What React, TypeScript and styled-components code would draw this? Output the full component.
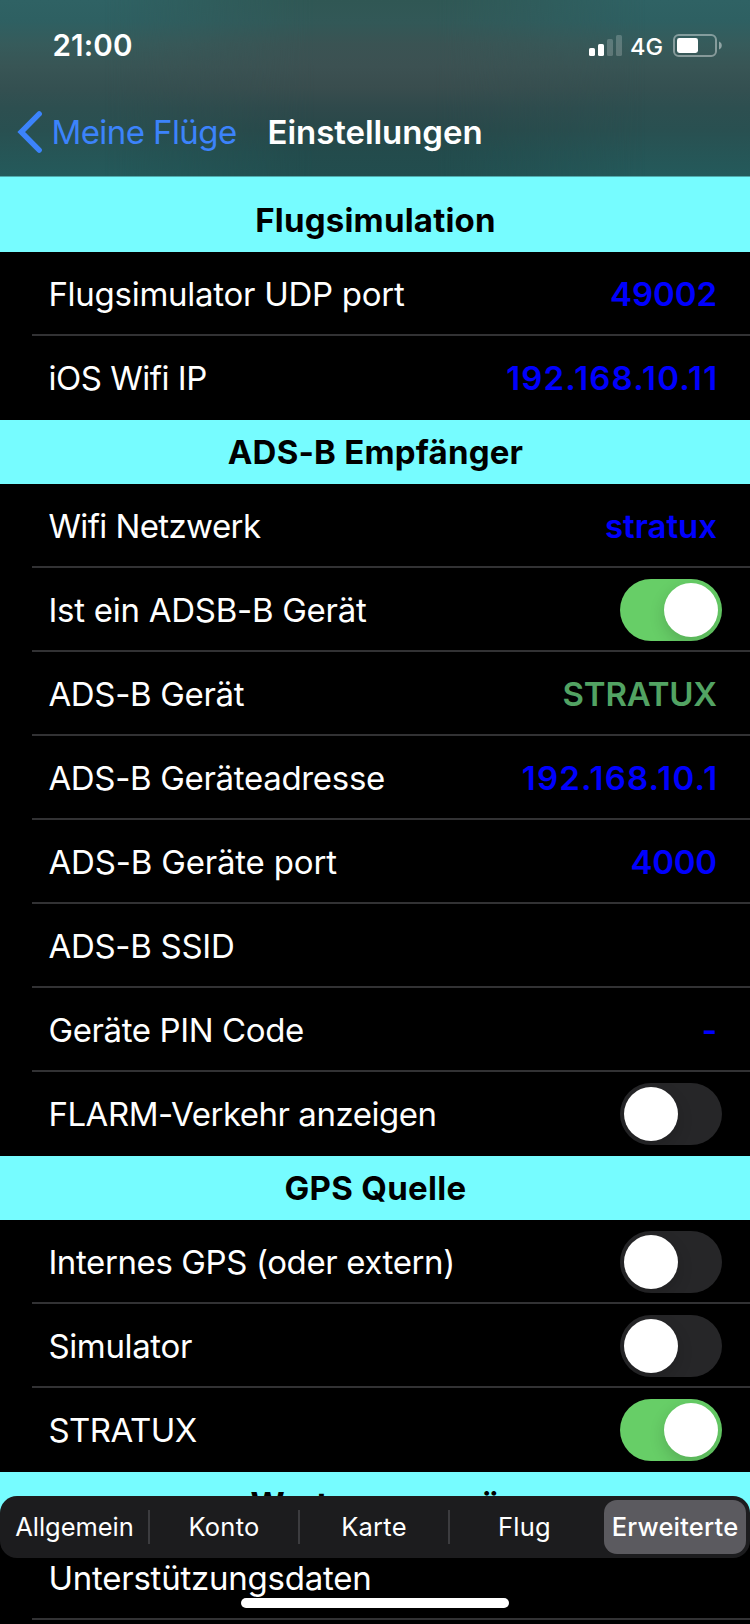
import React from 'react';
import styled, { createGlobalStyle } from 'styled-components';

const GlobalStyle = createGlobalStyle`
  * { box-sizing: border-box; }
  html, body { margin: 0; padding: 0; background: #000; }
  body { font-family: Inter, "Liberation Sans", sans-serif; overflow: hidden; }
`;

const Screen = styled.div`
  position: relative;
  width: 750px;
  height: 1624px;
  overflow: hidden;
  background: #000;
  color: #fff;
`;

const TopBar = styled.header`
  position: relative;
  height: 176px;
  background: linear-gradient(
    180deg,
    #2f6264 0px, #2e6062 20px, #365b5b 44px, #385555 66px, #345051 88px,
    #2d4f50 108px, #295051 130px, #265556 152px, #245a5b 176px
  );
  &::before {
    content: '';
    position: absolute;
    inset: 0;
    background: linear-gradient(
      180deg,
      #305754 0px, #325857 22px, #3a5353 44px, #3c5152 66px, #394d4e 88px,
      #2f494b 108px, #284849 130px, #234b4c 152px, #224d4e 176px
    );
    mask-image: linear-gradient(90deg, transparent 14%, #000 42%, #000 58%, transparent 86%);
  }
`;

const StatusBar = styled.div`
  position: relative;
  height: 88px;
  padding: 0 28px 0 52.5px;
  display: flex;
  justify-content: space-between;
`;

const Clock = styled.span`
  font-size: 29.6px;
  font-weight: 600;
  line-height: 90px;
  letter-spacing: 0.15px;
`;

const StatusIcons = styled.div`
  display: flex;
  align-items: flex-start;
`;

const Network = styled.span`
  width: 51px;
  padding-left: 8px;
  font-size: 23.5px;
  font-weight: 500;
  line-height: 93px;
`;

const SignalIcon = styled.svg`
  display: block;
  margin-top: 35px;
`;

const BatteryIcon = styled.svg`
  display: block;
  margin-top: 34px;
`;

const NavBar = styled.nav`
  position: relative;
  height: 88px;
  padding-left: 17px;
  display: flex;
  align-items: center;
  font-size: 33px;
  line-height: 88px;
  white-space: nowrap;
`;

const BackButton = styled.a`
  display: flex;
  align-items: center;
  gap: 8.4px;
  width: 250.5px;
  color: #3c83fb;
  letter-spacing: -0.57px;
`;

const NavTitle = styled.h1`
  margin: 0;
  font: inherit;
  font-weight: 600;
  letter-spacing: -0.06px;
`;

const SectionHeader = styled.h2<{ $first?: boolean; $spacing: number }>`
  margin: 0;
  height: ${p => (p.$first ? 76 : 64)}px;
  padding-top: ${p => (p.$first ? 12 : 0)}px;
  padding-left: 1px;
  background: #76fcff;
  box-shadow: ${p => (p.$first ? 'inset 0 1px 0 #4fabad' : 'none')};
  color: #000;
  font-size: 33px;
  font-weight: 700;
  line-height: 64px;
  letter-spacing: ${p => p.$spacing}px;
  text-align: center;
`;

const Row = styled.div<{ $last: boolean }>`
  height: 84px;
  margin-left: 32px;
  padding: 0 28px 0 16.4px;
  display: flex;
  align-items: center;
  justify-content: space-between;
  box-shadow: ${p => (p.$last ? 'none' : 'inset 0 -2px 0 #323234')};
  font-size: 33px;
  line-height: 84px;
  white-space: nowrap;
`;

const Label = styled.span<{ $spacing: number }>`
  letter-spacing: ${p => p.$spacing}px;
`;

const Value = styled.span<{ $color?: string; $spacing?: number }>`
  color: ${p => p.$color ?? '#0000fe'};
  font-weight: 600;
  letter-spacing: ${p => p.$spacing ?? 0}px;
  margin-right: ${p => 4.9 - (p.$spacing ?? 0)}px;
`;

const Switch = styled.span<{ $on: boolean }>`
  width: 102px;
  height: 62px;
  padding: 4px;
  border-radius: 31px;
  display: flex;
  justify-content: ${p => (p.$on ? 'flex-end' : 'flex-start')};
  background: ${p => (p.$on ? '#67ce67' : '#262628')};
  overflow: hidden;
`;

const Knob = styled.span`
  width: 54px;
  height: 54px;
  border-radius: 50%;
  background: #fff;
  box-shadow: 0 6px 16px rgba(0, 0, 0, 0.16);
`;

const SegmentedControl = styled.div`
  position: absolute;
  left: 0;
  top: 1496px;
  width: 750px;
  height: 62px;
  padding: 4px 4px 4px 0;
  border-radius: 17px;
  display: grid;
  grid-template-columns: 149px 150px 150px 151px 1fr;
  background: #1c1c1e;
`;

const Segment = styled.button<{ $selected: boolean; $divider: boolean; $spacing: number }>`
  position: relative;
  margin-left: ${p => (p.$selected ? 4 : 0)}px;
  padding: 0;
  border: 0;
  border-radius: 13px;
  background: ${p => (p.$selected ? '#5b5a5f' : 'transparent')};
  color: #fff;
  font: ${p => (p.$selected ? 500 : 400)} 25.5px Inter, sans-serif;
  line-height: 54px;
  letter-spacing: ${p => p.$spacing}px;
  &::after {
    content: '';
    display: ${p => (p.$divider ? 'block' : 'none')};
    position: absolute;
    right: -1px;
    top: 10px;
    width: 2px;
    height: 34px;
    background: #3c3c3f;
  }
`;

const HomeIndicator = styled.div`
  position: absolute;
  left: 241px;
  top: 1598px;
  width: 268px;
  height: 10px;
  border-radius: 5px;
  background: #fff;
`;

type Item = {
  label: string;
  spacing: number;
  value?: string;
  valueSpacing?: number;
  color?: string;
  on?: boolean;
};

type Section = { title: string; spacing: number; items: Item[]; open?: boolean };

const sections: Section[] = [
  {
    title: 'Flugsimulation',
    spacing: 0.2,
    items: [
      { label: 'Flugsimulator UDP port', spacing: -0.27, value: '49002' },
      { label: 'iOS Wifi IP', spacing: -0.48, value: '192.168.10.11', valueSpacing: 1.2 },
    ],
  },
  {
    title: 'ADS-B Empfänger',
    spacing: 0.22,
    items: [
      { label: 'Wifi Netzwerk', spacing: -0.6, value: 'stratux' },
      { label: 'Ist ein ADSB-B Gerät', spacing: -0.26, on: true },
      { label: 'ADS-B Gerät', spacing: -0.32, value: 'STRATUX', valueSpacing: -0.2, color: '#52a363' },
      { label: 'ADS-B Geräteadresse', spacing: -0.32, value: '192.168.10.1', valueSpacing: 1.15 },
      { label: 'ADS-B Geräte port', spacing: -0.17, value: '4000', valueSpacing: -0.2 },
      { label: 'ADS-B SSID', spacing: -0.28 },
      { label: 'Geräte PIN Code', spacing: -0.38, value: '-' },
      { label: 'FLARM-Verkehr anzeigen', spacing: -0.47, on: false },
    ],
  },
  {
    title: 'GPS Quelle',
    spacing: 0.3,
    items: [
      { label: 'Internes GPS (oder extern)', spacing: -0.39, on: false },
      { label: 'Simulator', spacing: -0.36, on: false },
      { label: 'STRATUX', spacing: -0.52, on: true },
    ],
  },
  {
    title: 'Wartungsmenü',
    spacing: 0.1,
    open: true,
    items: [{ label: 'Unterstützungsdaten', spacing: -0.23 }],
  },
];

const tabs = [
  { label: 'Allgemein', spacing: -0.05 },
  { label: 'Konto', spacing: 0.25 },
  { label: 'Karte', spacing: 0.25 },
  { label: 'Flug', spacing: 0.25 },
  { label: 'Erweiterte', spacing: 0.2 },
];

export default function App() {
  const selected = tabs.length - 1;
  return (
    <Screen>
      <GlobalStyle />
      <TopBar>
        <StatusBar>
          <Clock>21:00</Clock>
          <StatusIcons>
            <SignalIcon width="33" height="21" viewBox="0 0 33 21" fill="#fff">
              <rect x="0" y="13" width="6" height="8" rx="1.6" />
              <rect x="9" y="9" width="6" height="12" rx="1.6" />
              <rect x="18" y="4" width="6" height="17" rx="1.6" opacity="0.2" />
              <rect x="27" y="0" width="6" height="21" rx="1.6" opacity="0.2" />
            </SignalIcon>
            <Network>4G</Network>
            <BatteryIcon width="49" height="23" viewBox="0 0 49 23">
              <rect x="1" y="1" width="42" height="21" rx="4.8" fill="none" stroke="#fff" strokeWidth="2" opacity="0.4" />
              <rect x="4" y="4" width="21" height="15" rx="2.4" fill="#fff" />
              <path d="M46 7.5 C49.7 8.8 49.7 14.2 46 15.5 Z" fill="#fff" opacity="0.45" />
            </BatteryIcon>
          </StatusIcons>
        </StatusBar>
        <NavBar>
          <BackButton>
            <svg width="26" height="42" viewBox="0 0 26 42" fill="none" stroke="currentColor" strokeWidth="5.4" strokeLinecap="round" strokeLinejoin="miter">
              <path d="M22.2 2.9 L4.2 21 L22.2 39.1" />
            </svg>
            Meine Flüge
          </BackButton>
          <NavTitle>Einstellungen</NavTitle>
        </NavBar>
      </TopBar>
      <main>
        {sections.map((section, s) => (
          <section key={section.title}>
            <SectionHeader $first={s === 0} $spacing={section.spacing}>{section.title}</SectionHeader>
            {section.items.map((item, i) => (
              <Row key={item.label} $last={!section.open && i === section.items.length - 1}>
                <Label $spacing={item.spacing}>{item.label}</Label>
                {item.value && <Value $color={item.color} $spacing={item.valueSpacing}>{item.value}</Value>}
                {item.on !== undefined && <Switch $on={item.on}><Knob /></Switch>}
              </Row>
            ))}
          </section>
        ))}
      </main>
      <SegmentedControl>
        {tabs.map((tab, i) => (
          <Segment key={tab.label} $selected={i === selected} $divider={i < selected - 1} $spacing={tab.spacing}>
            {tab.label}
          </Segment>
        ))}
      </SegmentedControl>
      <HomeIndicator />
    </Screen>
  );
}
